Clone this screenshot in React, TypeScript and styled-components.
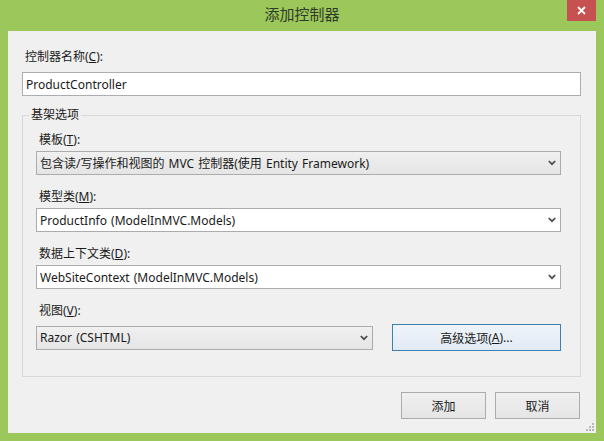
import React, { FC, ReactNode } from "react";
import styled, { createGlobalStyle } from "styled-components";

const GlobalStyle = createGlobalStyle`
  html, body {
    margin: 0;
    padding: 0;
    background: #9cc75b;
  }
  body {
    font-family: "Noto Sans", "Noto Sans CJK SC", sans-serif;
    font-size: 12px;
    color: #1a1a1a;
  }
`;

const Window = styled.div`
  width: 604px;
  height: 441px;
  box-sizing: border-box;
  background: #9cc75b;
  display: flex;
  flex-direction: column;
`;

const TitleBar = styled.div`
  height: 31px;
  display: flex;
  align-items: flex-start;
  padding: 0 8px 0 37px;
`;

const Title = styled.div`
  flex: 1;
  text-align: center;
  line-height: 29px;
  font-size: 15px;
  color: #2f3a28;
`;

const CloseButton = styled.div`
  width: 29px;
  height: 21px;
  background: #c75050;
  display: flex;
  align-items: center;
  justify-content: center;
`;

const Body = styled.div`
  position: relative;
  flex: 1;
  margin: 0 8px 8px;
  box-sizing: border-box;
  background: #f0f0f0;
  padding: 18px 15px 14px 14px;
  display: flex;
  flex-direction: column;
`;

const Label = styled.div<{ $gap?: number }>`
  line-height: 16px;
  padding-left: 3px;
  margin-bottom: ${(p) => p.$gap ?? 3}px;
  white-space: nowrap;
`;

const TextInput = styled.div`
  height: 24px;
  box-sizing: border-box;
  border: 1px solid #abadb3;
  background: #fff;
  padding-left: 3px;
  display: flex;
  align-items: center;
`;

const Group = styled.fieldset`
  margin: 11px 0 0;
  border: 1px solid #d8d8d8;
  padding: 9px 19px 25px 13px;
  min-width: 0;
`;

const Legend = styled.legend`
  margin-left: -7px;
  padding: 0 2px;
  line-height: 16px;
`;

const FieldStack = styled.div`
  display: flex;
  flex-direction: column;
  gap: 14px;
`;

const Combo = styled.div<{ $editable?: boolean }>`
  height: 24px;
  box-sizing: border-box;
  border: 1px solid #acacac;
  background: ${(p) =>
    p.$editable ? "#fff" : "linear-gradient(#f0f0f0, #e5e5e5)"};
  display: flex;
  align-items: center;
  padding: 0 4px 0 3px;
  min-width: 0;
`;

const ComboText = styled.span`
  flex: 1;
  white-space: nowrap;
  overflow: hidden;
  word-spacing: 1px;
`;

const ViewRow = styled.div`
  display: grid;
  grid-template-columns: 1fr 169px;
  gap: 19px;
  align-items: center;
  height: 27px;
`;

const Button = styled.div<{ $default?: boolean }>`
  height: 27px;
  box-sizing: border-box;
  border: 1px solid ${(p) => (p.$default ? "#3c7fb1" : "#acacac")};
  background: ${(p) =>
    p.$default
      ? "linear-gradient(#eef4fa, #e2ebf4)"
      : "linear-gradient(#f0f0f0, #e5e5e5)"};
  display: flex;
  align-items: center;
  justify-content: center;
  white-space: nowrap;
`;

const Footer = styled.div`
  margin-top: 15px;
  padding-right: 1px;
  display: flex;
  justify-content: flex-end;
  gap: 9px;
`;

const FooterButton = styled(Button)`
  width: 85px;
`;

const Grip = styled.svg`
  position: absolute;
  right: 2px;
  bottom: 2px;
`;

const Chevron = () => (
  <svg width="8" height="6" viewBox="0 0 8 6">
    <path d="M0.8 1 L4 4.2 L7.2 1" fill="none" stroke="#4a4a4a" strokeWidth="1.7" />
  </svg>
);

const Field: FC<{ label: ReactNode; children: ReactNode }> = (props) => (
  <div>
    <Label>{props.label}</Label>
    {props.children}
  </div>
);

export default function App() {
  return (
    <Window>
      <GlobalStyle />
      <TitleBar>
        <Title>添加控制器</Title>
        <CloseButton>
          <svg width="9" height="9" viewBox="0 0 9 9">
            <path d="M1 1 L8 8 M8 1 L1 8" stroke="#fff" strokeWidth="1.8" />
          </svg>
        </CloseButton>
      </TitleBar>
      <Body>
        <Label $gap={7}>
          控制器名称(<u>C</u>):
        </Label>
        <TextInput>ProductController</TextInput>

        <Group>
          <Legend>基架选项</Legend>
          <FieldStack>
            <Field label={<>模板(<u>T</u>):</>}>
              <Combo>
                <ComboText>
                  包含读/写操作和视图的 MVC 控制器(使用 Entity Framework)
                </ComboText>
                <Chevron />
              </Combo>
            </Field>
            <Field label={<>模型类(<u>M</u>):</>}>
              <Combo $editable>
                <ComboText>ProductInfo (ModelInMVC.Models)</ComboText>
                <Chevron />
              </Combo>
            </Field>
            <Field label={<>数据上下文类(<u>D</u>):</>}>
              <Combo $editable>
                <ComboText>WebSiteContext (ModelInMVC.Models)</ComboText>
                <Chevron />
              </Combo>
            </Field>
            <div>
              <Label $gap={5}>
                视图(<u>V</u>):
              </Label>
              <ViewRow>
                <Combo>
                  <ComboText>Razor (CSHTML)</ComboText>
                  <Chevron />
                </Combo>
                <Button $default>
                  高级选项(<u>A</u>)...
                </Button>
              </ViewRow>
            </div>
          </FieldStack>
        </Group>

        <Footer>
          <FooterButton>添加</FooterButton>
          <FooterButton>取消</FooterButton>
        </Footer>

        <Grip width="8" height="8" viewBox="0 0 8 8">
          {[
            [6, 0],
            [6, 3],
            [3, 3],
            [6, 6],
            [3, 6],
            [0, 6],
          ].map(([x, y]) => (
            <rect key={`${x}-${y}`} x={x} y={y} width="2" height="2" fill="#b8b8b8" />
          ))}
        </Grip>
      </Body>
    </Window>
  );
}
